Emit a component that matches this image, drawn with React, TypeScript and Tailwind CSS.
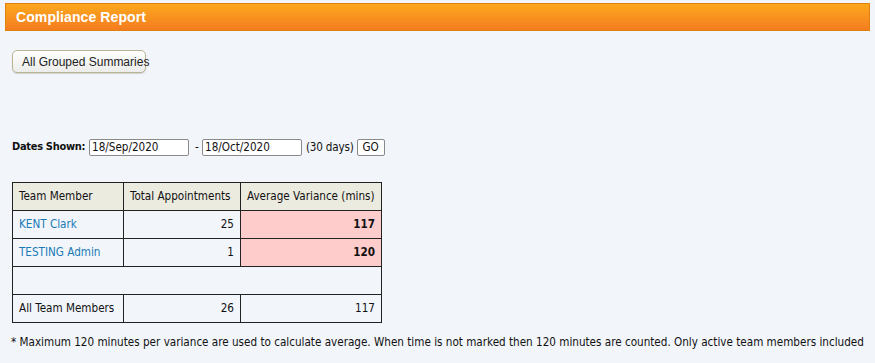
import React from "react";

const font = { fontFamily: '"DejaVu Sans Condensed", "DejaVu Sans", sans-serif' };

export default function App() {
  return (
    <div className="min-h-[363px] w-full bg-[#f2f6fa] pt-[3px] text-[11.6px] text-[#111]" style={font}>
      <div className="mx-[5px] h-[28px] border border-[#e0810f] bg-gradient-to-b from-[#fca81d] to-[#f47c20] pl-[10px] flex items-center">
        <span className="text-white font-bold text-[14px] tracking-[0.1px]" style={{ fontFamily: '"Liberation Sans", Arial, sans-serif' }}>
          Compliance Report
        </span>
      </div>
      <div className="pl-[12px] pt-[19px]">
        <button
          className="h-[23px] w-[134px] rounded-[5px] border border-[#b9b592] bg-gradient-to-b from-white to-[#ececea] pl-[9px] pt-[1px] text-left text-[12px] text-[#222] whitespace-nowrap overflow-visible shadow-[0_1px_1px_rgba(0,0,0,0.15)]"
          style={{ fontFamily: '"Liberation Sans", Arial, sans-serif' }}
        >
          All Grouped Summaries
        </button>
      </div>
      <div className="pl-[12px] pt-[66px] flex items-center h-[17px] box-content">
        <span className="font-bold w-[77px] text-[11px] tracking-[-0.3px]">Dates Shown:</span>
        <input
          readOnly
          value="18/Sep/2020"
          className="h-[17px] w-[100px] border border-[#8a8a8a] rounded-[2px] bg-white px-[2px] text-[11.6px] text-[#111] outline-none"
          style={font}
        />
        <span className="ml-[6px] w-[7px]">-</span>
        <input
          readOnly
          value="18/Oct/2020"
          className="h-[17px] w-[100px] border border-[#8a8a8a] rounded-[2px] bg-white px-[2px] text-[11.6px] text-[#111] outline-none"
          style={font}
        />
        <span className="ml-[4px] tracking-[-0.2px]">(30 days)</span>
        <button className="ml-[3px] h-[17px] w-[28px] border border-[#8a8a8a] rounded-[2px] bg-white text-[11.6px] text-[#111] leading-none" style={font}>
          GO
        </button>
      </div>
      <div className="pl-[12px] pt-[26px]">
        <table className="border-collapse border border-[#222]">
          <thead>
            <tr className="h-[28px] bg-[#ecebe0]">
              <th className="w-[111px] border border-[#222] px-[6px] text-left font-normal">Team Member</th>
              <th className="w-[117px] border border-[#222] px-[6px] text-left font-normal">Total Appointments</th>
              <th className="w-[141px] border border-[#222] px-[6px] text-left font-normal">Average Variance (mins)</th>
            </tr>
          </thead>
          <tbody>
            <tr className="h-[28px]">
              <td className="border border-[#222] px-[6px] text-[#1a7ab8]">KENT Clark</td>
              <td className="border border-[#222] px-[6px] text-right">25</td>
              <td className="border border-[#222] px-[6px] text-right font-bold bg-[#ffcccc]">117</td>
            </tr>
            <tr className="h-[28px]">
              <td className="border border-[#222] px-[6px] text-[#1a7ab8]">TESTING Admin</td>
              <td className="border border-[#222] px-[6px] text-right">1</td>
              <td className="border border-[#222] px-[6px] text-right font-bold bg-[#ffcccc]">120</td>
            </tr>
            <tr className="h-[28px]">
              <td colSpan={3} className="border border-[#222]"></td>
            </tr>
            <tr className="h-[28px]">
              <td className="border border-[#222] px-[6px]">All Team Members</td>
              <td className="border border-[#222] px-[6px] text-right">26</td>
              <td className="border border-[#222] px-[6px] text-right">117</td>
            </tr>
          </tbody>
        </table>
      </div>
      <div className="pl-[11px] pt-[11px] whitespace-nowrap">
        * Maximum 120 minutes per variance are used to calculate average. When time is not marked then 120 minutes are counted. Only active team members included
      </div>
    </div>
  );
}
